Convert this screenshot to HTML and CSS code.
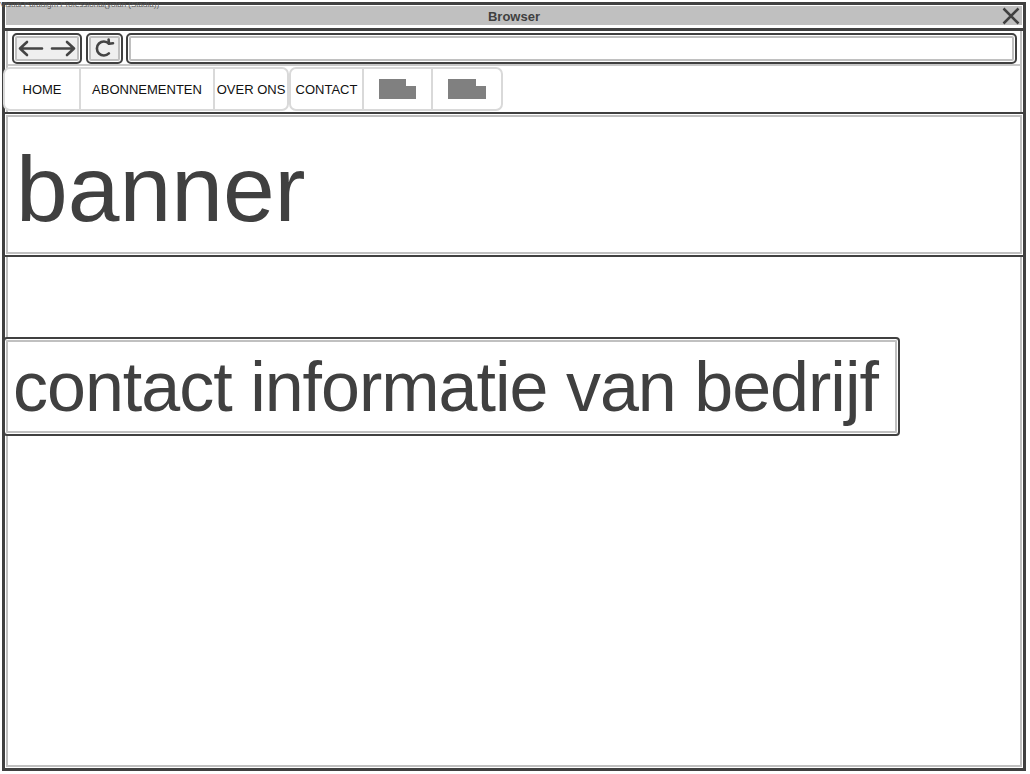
FILE: index.html
```html
<!DOCTYPE html>
<html>
<head>
<meta charset="utf-8">
<link rel="stylesheet" href="styles.css">
</head>
<body>
<div class="watermark">Visual Paradigm Professional(yolan (Stadia))</div>
<div class="frame">
  <div class="head">
    <div class="titlebar">
      <span class="title">Browser</span>
      <svg class="close" width="18" height="18" viewBox="0 0 18 18"><path d="M1.5 1.5 L16.5 16.5 M16.5 1.5 L1.5 16.5" stroke="#404040" stroke-width="2.5" fill="none"/></svg>
    </div>
  </div>
  <div class="content">
    <div class="toolbar">
      <div class="btn back">
        <svg width="66" height="27" viewBox="0 0 66 27"><g stroke="#454545" stroke-width="2.6" fill="none" stroke-linecap="round" stroke-linejoin="round"><path d="M6 13.5 H28 M13 7 L6 13.5 L13 20"/><path d="M38 13.5 H60 M53 7 L60 13.5 L53 20"/></g></svg>
      </div>
      <div class="btn refresh">
        <svg width="33" height="27" viewBox="0 0 33 27"><g stroke="#454545" stroke-width="2.6" fill="none" stroke-linecap="round" stroke-linejoin="round"><path d="M20.9 8.6 A7 7 0 1 0 20.9 18.4"/><path d="M20.6 4.6 L21 8.8 L25 8.2"/></g></svg>
      </div>
      <div class="btn url"></div>
    </div>
    <nav class="tabs">
      <div class="group">
        <div class="tab w74">HOME</div>
        <div class="tab w134">ABONNEMENTEN</div>
        <div class="tab w74">OVER ONS</div>
      </div>
      <div class="group">
        <div class="tab w71">CONTACT</div>
        <div class="tab w69"><svg width="37" height="20" viewBox="0 0 37 20"><polygon points="0,0 27,0 27,7 37,7 37,20 0,20" fill="#808080"/></svg></div>
        <div class="tab w70"><svg width="38" height="20" viewBox="0 0 38 20"><polygon points="0,0 28,0 28,7 38,7 38,20 0,20" fill="#808080"/></svg></div>
      </div>
    </nav>
    <div class="banner">banner</div>
    <div class="contact">contact informatie van bedrijf</div>
  </div>
</div>
</body>
</html>
```

FILE: styles.css
```css
* { box-sizing: border-box; }
html, body { margin: 0; padding: 0; background: #fff; }
body {
  width: 1030px;
  height: 774px;
  overflow: hidden;
  position: relative;
  font-family: "Liberation Sans", Arial, sans-serif;
  color: #404040;
}
.watermark {
  position: absolute;
  left: 0;
  top: 0;
  font-size: 8px;
  line-height: 10px;
  color: #5a5a5a;
  white-space: nowrap;
  z-index: 5;
}
.frame {
  margin: 2px 0 0 2px;
  width: 1024px;
  height: 769px;
  border: 3px solid #404040;
  display: flex;
  flex-direction: column;
}
.head {
  padding: 1px 1px 3px;
  border-bottom: 3px solid #404040;
}
.titlebar {
  height: 19px;
  background: #c0c0c0;
  display: grid;
  grid-template-columns: 1fr auto 1fr;
  align-items: center;
}
.title {
  grid-column: 2;
  font-weight: bold;
  font-size: 13px;
  color: #404040;
  padding-top: 1px;
}
.close {
  grid-column: 3;
  justify-self: end;
  margin-right: 2px;
  display: block;
}
.content {
  flex: 1;
  margin: 0 1px 1px;
  border: 2px solid #c0c0c0;
  border-top: 0;
  display: flex;
  flex-direction: column;
}
.toolbar {
  display: flex;
  padding: 2px 3px 0 4px;
  border-bottom: 2px solid #c8c8c8;
}
.btn {
  height: 31px;
  border: 2px solid #404040;
  border-radius: 5px;
  box-shadow: inset 0 0 0 1px #fff, inset 0 0 0 3px #c0c0c0;
  background: #efefef;
  display: flex;
  align-items: center;
  justify-content: center;
}
.btn svg { display: block; }
.back { width: 70px; margin-right: 4px; }
.refresh { width: 37px; margin-right: 3px; }
.url { flex: 1; background: #fff; }
.tabs {
  display: flex;
  margin: 1px 0 0 -5px;
  height: 44px;
}
.group {
  display: flex;
  flex: none;
  border: 2px solid #d9d9d9;
  border-radius: 7px;
  background: #fff;
}
.tab {
  flex: none;
  display: flex;
  align-items: center;
  justify-content: center;
  font-size: 13px;
  color: #111;
  white-space: nowrap;
}
.tab + .tab { border-left: 2px solid #d9d9d9; }
.w74 { width: 74px; }
.w134 { width: 134px; }
.w71 { width: 71px; }
.w69 { width: 69px; }
.w70 { width: 70px; }
.banner {
  margin: 1px -5px 0;
  height: 145px;
  border: 2px solid #404040;
  box-shadow: inset 0 0 0 1px #fff, inset 0 0 0 3px #c0c0c0;
  font-size: 93px;
  line-height: 93px;
  padding: 29px 0 0 11px;
}
.contact {
  margin: 80px 0 0 -5px;
  width: 897px;
  height: 99px;
  border: 2px solid #404040;
  border-radius: 4px;
  box-shadow: inset 0 0 0 1px #fff, inset 0 0 0 3px #c0c0c0;
  font-size: 70px;
  line-height: 70px;
  padding: 13px 0 0 8px;
  letter-spacing: -1px;
  white-space: nowrap;
}
```
